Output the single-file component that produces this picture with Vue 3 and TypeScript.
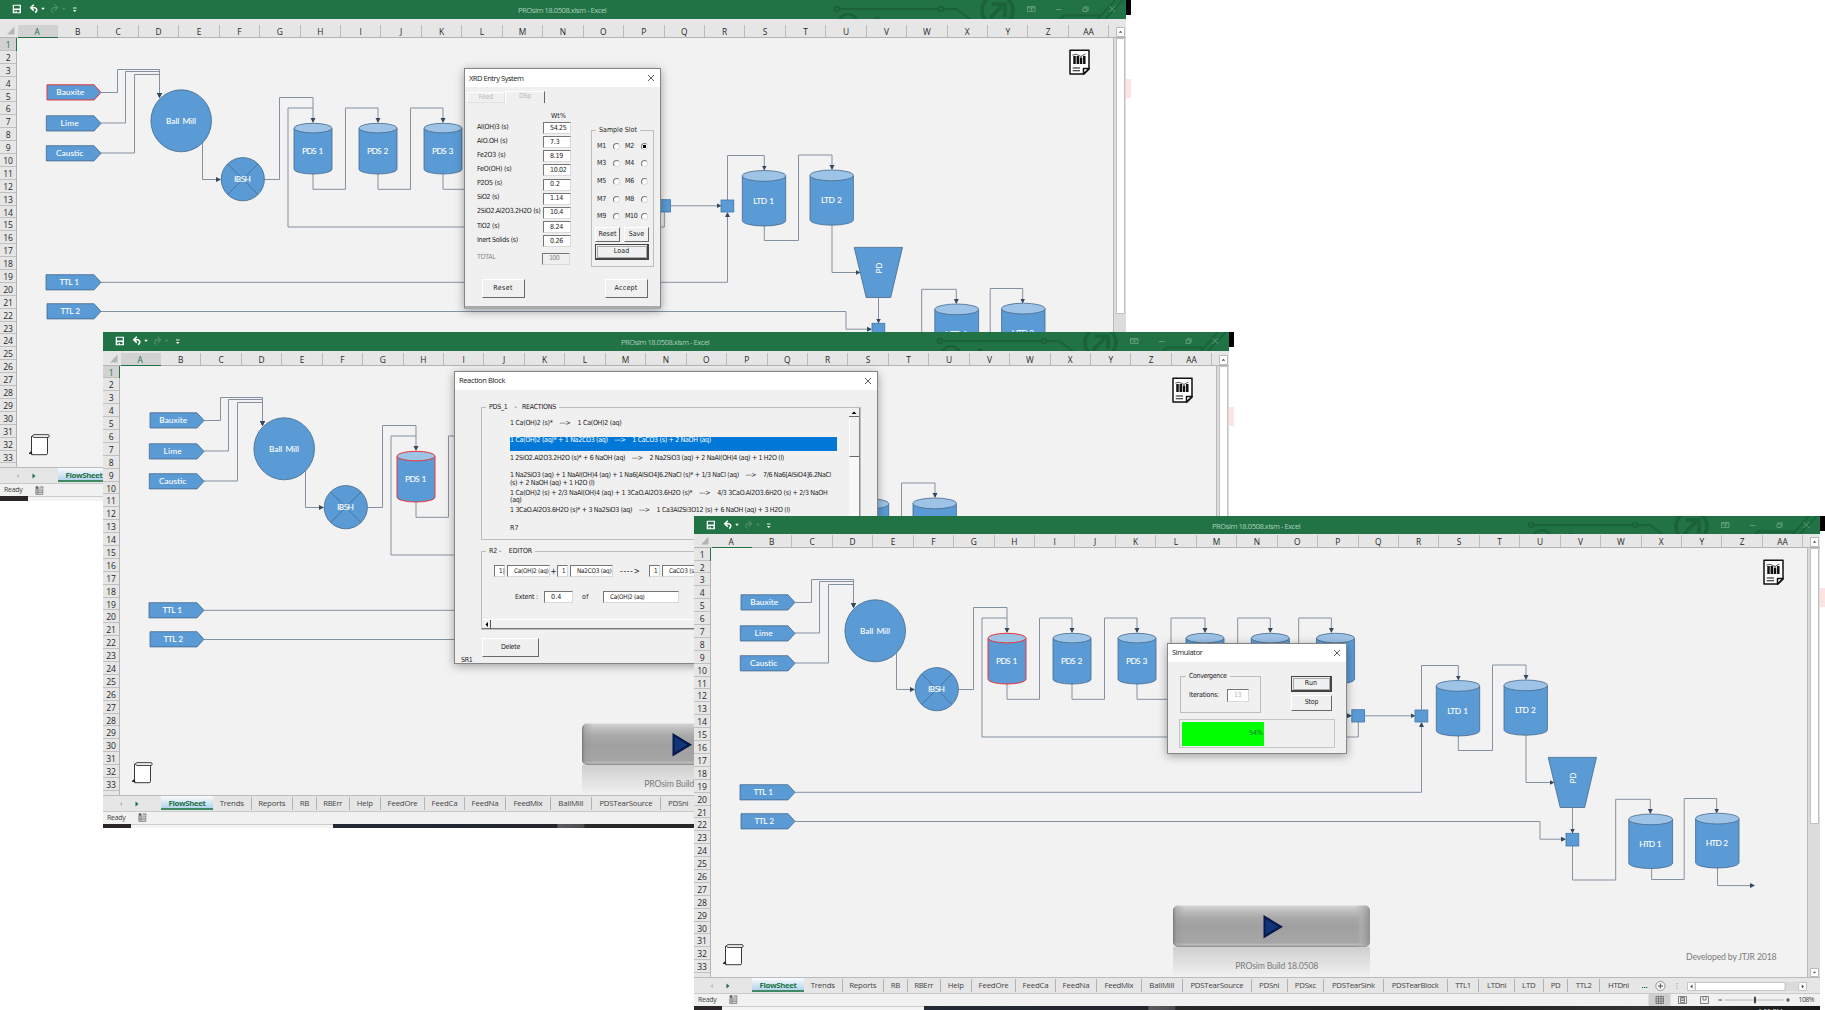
<script setup lang="ts">
interface Win {
  id: number
  x: number
  y: number
  titleH: number
  headH: number
  h: number
  selected: boolean
  red: string
}
interface Tank {
  name: string
  cx: number
  top: number
  bottom: number
  w: number
  textW: number
}

const windows: Win[] = [
  { id: 1, x: 0, y: 0, titleH: 19, headH: 19, h: 501, selected: true, red: 'Bauxite' },
  { id: 2, x: 103, y: 332, titleH: 19, headH: 14.5, h: 496, selected: true, red: 'PDS 1' },
  { id: 3, x: 694, y: 516, titleH: 18, headH: 13.7, h: 494, selected: false, red: 'PDS 1' },
]

const columns = [...'ABCDEFGHIJKLMNOPQRSTUVWXYZ', 'AA']

const feeds = [
  { name: 'Bauxite', x: 47, y: 84.8, w: 28 },
  { name: 'Lime', x: 46.3, y: 115.8, w: 18 },
  { name: 'Caustic', x: 46.3, y: 145.7, w: 27.3 },
  { name: 'TTL 1', x: 46, y: 274.7, w: 19.7 },
  { name: 'TTL 2', x: 47, y: 303.7, w: 19.7 },
]

const tanks: Tank[] = [
  { name: 'PDS 1', cx: 313, top: 123.3, bottom: 174, w: 38, textW: 21.3 },
  { name: 'PDS 2', cx: 378, top: 123.3, bottom: 174, w: 38, textW: 21.3 },
  { name: 'PDS 3', cx: 443, top: 123.3, bottom: 174, w: 38, textW: 21.3 },
  { name: 'PDS 4', cx: 511, top: 123.3, bottom: 174, w: 38, textW: 21.3 },
  { name: 'PDS 5', cx: 576.3, top: 123.3, bottom: 174, w: 38, textW: 21.3 },
  { name: 'PDS 6', cx: 641.5, top: 123.3, bottom: 174, w: 38, textW: 21.3 },
  { name: 'LTD 1', cx: 764, top: 170.5, bottom: 226, w: 43.4, textW: 20.8 },
  { name: 'LTD 2', cx: 831.7, top: 170, bottom: 225.2, w: 43.4, textW: 20.8 },
  { name: 'HTD 1', cx: 956.7, top: 304, bottom: 358.5, w: 43.8, textW: 22.4 },
  { name: 'HTD 2', cx: 1023.3, top: 303.2, bottom: 358, w: 43.4, textW: 22.4 },
]

const pipes = [
  'M101 92.5H117.5V69.5H159.5V97',
  'M100.5 123H125.5V71.5H159.5V97',
  'M100.5 153H134.5V74.5H159.5V97',
  'M202.5 143V179.5H220',
  'M264.5 179.5H279.5V97.5H313V122',
  'M313 174V189.3H345.5V108H378V122',
  'M378 174V189.3H410.5V108H443V122',
  'M443 174V189.3H477V108H511V122',
  'M511 174V189.3H543.7V108H576.3V122',
  'M576.3 174V189.3H604.7V108H637.4V122',
  'M641 174V189.3H650V205.8H657',
  'M671 205.8H720.5',
  'M727.5 200V155.5H764.3V169.5',
  'M764.3 226V240.5H798.5V155H832V169',
  'M832 225V272.5H859.5',
  'M878.5 298V322.5',
  'M100.5 282.3H727.5V213',
  'M101 311.5H846V329.2H871',
  'M878.5 336V370H921.7V289.3H956.3V303',
  'M957.6 358V369.5H990.2V288.5H1022.7V302.5',
  'M1023.5 358V375.6H1060',
]

const sheetTabs: [string, number, number][] = [
  ['Trends', 38.5, 24], ['Reports', 41.5, 27], ['RB', 23.6, 9], ['RBErr', 33.1, 19], ['Help', 31.2, 16],
  ['FeedOre', 44.4, 30], ['FeedCa', 39.6, 26], ['FeedNa', 41.4, 27], ['FeedMix', 44.4, 29], ['BallMill', 41.4, 25],
  ['PDSTearSource', 68.7, 53], ['PDSni', 35.8, 20], ['PDSxc', 36.7, 21], ['PDSTearSink', 59.4, 43],
  ['PDSTearBlock', 64.1, 47], ['TTL1', 31.6, 15.5], ['LTDni', 35.6, 19], ['LTD', 28.8, 13.5], ['PD', 24.7, 9.5],
  ['TTL2', 31.6, 16], ['HTDni', 37, 21],
]

const assays: [string, string, number, number][] = [
  ['Al(OH)3 (s)', '54.25', 31.5, 16.5],
  ['AlO.OH (s)', '7.3', 30.5, 9.5],
  ['Fe2O3 (s)', '8.19', 28.5, 13],
  ['FeO(OH) (s)', '10.02', 34.5, 16.5],
  ['P2O5 (s)', '0.2', 25, 10],
  ['SiO2 (s)', '1.14', 22, 13],
  ['2SiO2.Al2O3.2H2O (s)', '10.4', 63.5, 13],
  ['TiO2 (s)', '8.24', 22.5, 13],
  ['Inert Solids (s)', '0.26', 41, 13],
]

const reactions: [string, number, string, number][] = [
  ['1 Ca(OH)2 (s)*    --->    1 Ca(OH)2 (aq)', 111.5, '', 0],
  ['1 Ca(OH)2 (aq)* + 1 Na2CO3 (aq)    --->    1 CaCO3 (s) + 2 NaOH (aq)', 201, '', 0],
  ['1 2SiO2.Al2O3.2H2O (s)* + 6 NaOH (aq)    --->    2 Na2SiO3 (aq) + 2 NaAl(OH)4 (aq) + 1 H2O (l)', 274, '', 0],
  ['1 Na2SiO3 (aq) + 1 NaAl(OH)4 (aq) + 1 Na6[AlSiO4]6.2NaCl (s)* + 1/3 NaCl (aq)    --->    7/6 Na6[AlSiO4]6.2NaCl', 321, '(s) + 2 NaOH (aq) + 1 H2O (l)', 84.5],
  ['1 Ca(OH)2 (s) + 2/3 NaAl(OH)4 (aq) + 1 3CaO.Al2O3.6H2O (s)*    --->    4/3 3CaO.Al2O3.6H2O (s) + 2/3 NaOH', 317.5, '(aq)', 11.5],
  ['1 3CaO.Al2O3.6H2O (s)* + 3 Na2SiO3 (aq)    --->    1 Ca3Al2Si3O12 (s) + 6 NaOH (aq) + 3 H2O (l)', 280, '', 0],
  ['R7', 8.5, '', 0],
]

function tankPath(t: Tank): string {
  const l = t.cx - t.w / 2
  const r = t.cx + t.w / 2
  const ry = t.w > 40 ? 5.4 : 4.8
  return `M${l} ${t.top + ry}V${t.bottom - ry}A${t.w / 2} ${ry} 0 0 0 ${r} ${t.bottom - ry}V${t.top + ry}`
}

/* Tracks a run of text out or in so that it spans the given width. */
const vFit = {
  mounted(el: HTMLElement, binding: { value: number }) {
    const n = (el.textContent ?? '').length
    if (!n) return
    el.style.letterSpacing = `${(binding.value - el.getBoundingClientRect().width) / n}px`
  },
}
</script>

<template>
  <main class="desktop">
    <section
      v-for="w in windows"
      :key="w.id"
      class="window"
      :style="{ left: w.x + 'px', top: w.y + 'px', height: w.h + 'px' }"
    >
      <div class="frame">
        <header class="titlebar" :style="{ height: w.titleH + 'px' }">
          <svg class="titleart" width="1126" height="19" viewBox="0 0 1126 19">
            <g fill="none" stroke="#1b6139" stroke-width="1.8">
              <circle cx="837" cy="9" r="2.3" />
              <path d="M840 9H938M944 9H956L971 20" />
              <circle cx="941" cy="9" r="2.3" />
              <circle cx="848" cy="24" r="9.8" stroke-width="2.6" />
              <circle cx="997.5" cy="10.5" r="15.5" stroke-width="3.6" />
              <path d="M990 18L1004 4M992 4H1005V17" stroke-width="3.6" />
              <path d="M1059 20L1064 15.5H1102M1097 20L1115 0M1104 20L1123 0" stroke-width="1.8" />
            </g>
            <circle cx="877" cy="19.5" r="3" fill="#1b6139" />
            <path d="M12.700 4.700H21V13.300H12.700ZM14 5.800V8.500H19.700V5.800ZM14.300 10V12.200H15.600V10.800H16.800V12.200H19.400V10Z" fill="#fff" fill-rule="evenodd" />
            <g fill="none" stroke="#fff" stroke-width="1.2">
              <path d="M31 7.700H35A2.500 2.500 0 0 1 35 12.500M33.800 4.700L30.800 7.700L33.800 10.700" stroke-width="1.6" />
              <path d="M57.500 7.700H53.500A2.500 2.500 0 0 0 53.500 12.500M54.700 4.700L57.700 7.700L54.700 10.700" stroke="#4c9069" />
              <path d="M73 8H76.500" stroke-width=".9" />
            </g>
            <path d="M41.200 7.800H44.800L43 9.900ZM73 10H76.500L74.700 12Z" fill="#fff" />
            <path d="M62 7.800H65.500L63.700 9.900Z" fill="#4c9069" />
            <g fill="none" stroke="#6fa586" stroke-width=".8">
              <path d="M1027.500 6.500H1035V11.500H1027.500ZM1027.500 7.800H1035M1031.300 11V8.500M1030 9.700L1031.300 8.400L1032.600 9.700" />
              <path d="M1056 9.500H1061.500" />
              <path d="M1083 8H1087V11.500H1083ZM1084.200 8V6.800H1088.200V10.300H1087" />
              <path d="M1109.500 6.300L1115.200 12M1115.200 6.300L1109.500 12" />
            </g>
          </svg>
          <span class="doc"><span v-fit="88.3" class="t">PROsim 18.0508.xlsm - Excel</span></span>
        </header>

        <div class="colhead" :style="{ height: w.headH + 'px' }">
          <svg class="corner" width="17" height="12" viewBox="0 0 17 12"><path d="M14.500 1.500V9.500H7Z" fill="#b5b5b5" /></svg>
          <span v-for="(c, i) in columns" :key="c" class="col" :class="{ on: i === 0, lit: i === 0 && w.selected }">{{ c }}</span>
          <span class="scrolltop"><svg width="9" height="10" viewBox="0 0 9 10"><path d="M.5 .5H8.500V9.500H.5Z" fill="#fff" stroke="#bbb" /><path d="M2.700 5.700H6.300L4.500 3.800Z" fill="#555" /></svg></span>
        </div>

        <div class="body">
          <div class="rowhead">
            <span v-for="n in 33" :key="n" class="row" :class="{ on: n === 1, lit: n === 1 && w.selected }">{{ n }}</span>
          </div>
          <svg class="sheet" width="1096" height="429" viewBox="17 38 1096 429">
            <defs>
              <marker :id="'tip' + w.id" markerUnits="userSpaceOnUse" markerWidth="6" markerHeight="6" refX="4" refY="2.500" orient="auto">
                <path d="M0 0L5 2.500L0 5Z" fill="#34495f" />
              </marker>
              <linearGradient :id="'btn' + w.id" x1="0" y1="0" x2="0" y2="1">
                <stop offset="0" stop-color="#d6d6d6" /><stop offset=".1" stop-color="#c2c2c2" />
                <stop offset=".3" stop-color="#a9a9a9" /><stop offset=".5" stop-color="#a0a0a0" />
                <stop offset=".9" stop-color="#a6a6a6" /><stop offset=".95" stop-color="#bebebe" /><stop offset="1" stop-color="#858585" />
              </linearGradient>
              <linearGradient :id="'refl' + w.id" x1="0" y1="0" x2="0" y2="1">
                <stop offset="0" stop-color="#cfcfcf" /><stop offset="1" stop-color="#f1f1f1" />
              </linearGradient>
              <linearGradient :id="'side' + w.id" x1="0" y1="0" x2="1" y2="0">
                <stop offset="0" stop-color="#6c6c6c" stop-opacity=".8" /><stop offset=".015" stop-color="#909090" stop-opacity=".4" />
                <stop offset=".06" stop-color="#a0a0a0" stop-opacity="0" /><stop offset=".93" stop-color="#a0a0a0" stop-opacity="0" />
                <stop offset=".95" stop-color="#b5b5b5" stop-opacity=".5" /><stop offset="1" stop-color="#8c8c8c" stop-opacity=".8" />
              </linearGradient>
            </defs>

            <path d="M664.300 212V227H288V108H313" class="pipe" />
            <path v-for="p in pipes" :key="p" :d="p" class="pipe" :marker-end="`url(#tip${w.id})`" />

            <g v-for="f in feeds" :key="f.name">
              <path :d="`M${f.x} ${f.y}H94L101 ${f.y + 7.6}L94 ${f.y + 15.2}H${f.x}Z`" class="shape" :class="{ red: f.name === w.red }" />
              <text :x="f.x + 23.300" :y="f.y + 10.600" :textLength="f.w" class="label">{{ f.name }}</text>
            </g>

            <ellipse cx="181.200" cy="120.800" rx="30.300" ry="31" class="shape" />
            <text x="181" y="123.900" textLength="30" class="label">Ball Mill</text>
            <circle cx="242.800" cy="179.200" r="21.600" class="shape" />
            <path d="M227.600 163.900L258 194.500M258 163.900L227.600 194.500" class="shape" />
            <text x="242.500" y="182.300" textLength="17" class="label">IBSH</text>

            <g v-for="t in tanks" :key="t.name">
              <path :d="tankPath(t)" class="shape" :class="{ red: t.name === w.red }" />
              <ellipse :cx="t.cx" :cy="t.top + (t.w > 40 ? 5.4 : 4.8)" :rx="t.w / 2" :ry="t.w > 40 ? 5.4 : 4.8" class="shape lid" :class="{ red: t.name === w.red }" />
              <text :x="t.cx - .300" :y="(t.top + t.bottom) / 2 + 5.500" :textLength="t.textW" class="label">{{ t.name }}</text>
            </g>

            <rect x="657.800" y="199.700" width="12.800" height="12.300" class="shape box" />
            <rect x="721" y="200" width="12.800" height="12" class="shape box" />
            <rect x="872" y="323.300" width="12.800" height="12.700" class="shape box" />
            <path d="M854.200 247.400H902.500L890.700 297.500H866.200Z" class="shape" />
            <text transform="translate(881.500 268) rotate(-90)" class="label pd">PD</text>

            <g fill="#fff" stroke="#222" stroke-width=".9">
              <path d="M32 436H47.500V453.500Q47.500 454.700 46 454.700H31.500V436" />
              <path d="M33.500 434.700H48.500Q50 436 48.500 437.400H33.500Q31.500 436 33.500 434.700Z" />
              <path d="M29 453.500H32L31 451.800Z" fill="#222" />
            </g>

            <g fill="#fff" stroke="#111" stroke-width="1.500" stroke-linejoin="round">
              <path d="M1070 50.200H1089V69L1084 74H1070Z" />
              <path d="M1083.500 74V68.600H1089Z" />
              <path d="M1072.700 68H1080M1072.700 70.800H1080" stroke-width="1.100" />
              <path d="M1074.500 64V56M1077.800 64V56M1081 64V57.500M1084.300 64V56" stroke-width="2.500" stroke-linejoin="miter" />
              <path d="M1072.300 55.200L1076 54.200L1081 56.500L1085.500 54" fill="none" stroke-width=".7" />
            </g>

            <rect x="479" y="437" width="197" height="30" :fill="`url(#refl${w.id})`" />
            <rect x="479" y="395.500" width="197" height="41.500" rx="5" :fill="`url(#btn${w.id})`" />
            <rect x="479" y="395.500" width="197" height="41.500" rx="5" :fill="`url(#side${w.id})`" />
            <path d="M569.500 405V428.500L589 416.700Z" fill="#071a4e" />
            <path d="M571.500 409V424.500L584.500 416.700Z" fill="#123578" />
            <text x="582.800" y="459.300" textLength="83" class="note">PROsim Build 18.0508</text>
            <text x="1037.300" y="450" textLength="90.500" class="note">Developed by JTJR 2018</text>
          </svg>
          <div class="vscroll"><div class="thumb" /><svg width="9" height="9" viewBox="0 0 9 9"><path d="M.5 .5H8.500V8.500H.5Z" fill="#fff" stroke="#bbb" /><path d="M2.700 3.700H6.300L4.500 5.600Z" fill="#555" /></svg></div>
        </div>

        <div class="tabs">
          <svg width="58" height="17" viewBox="0 0 58 17"><path d="M19 6V10L16.500 8Z" fill="#bbb" /><path d="M32.500 5.500V10.500L35.500 8Z" fill="#1e7145" /></svg>
          <span class="tab active"><span v-fit="37" class="t">FlowSheet</span></span>
          <span v-for="[name, width, tw] in sheetTabs" :key="name" class="tab" :class="{ last: name === 'HTDni' }" :style="{ width: width + 'px' }"><span v-fit="tw" class="t">{{ name }}</span></span>
          <svg class="tabend" width="170" height="17" viewBox="943 0 170 17">
            <path d="M948 9.500H949.300M950 9.500H951.300M952 9.500H953.300" stroke="#1e7145" stroke-width="1.200" />
            <circle cx="966.400" cy="8" r="4.600" fill="#f4f4f4" stroke="#777" stroke-width=".7" />
            <path d="M964 8H969M966.400 5.500V10.500" stroke="#555" />
            <path d="M983 5V6M983 7.500V8.500M983 10V11" stroke="#999" />
            <path d="M993 4H1113V13H993Z" fill="#dadada" />
            <path d="M993.500 4.500H1001V12.500H993.500ZM1001.500 4.500H1091V12.500H1001.500ZM1104.700 4.500H1112.500V12.500H1104.700Z" fill="#fff" stroke="#bbb" stroke-width=".8" />
            <path d="M998.500 6.500V10.500L996.300 8.500ZM1107.800 6.500V10.500L1110 8.500Z" fill="#444" />
          </svg>
        </div>

        <div class="status">
          <span v-fit="18.500" class="t">Ready</span>
          <svg class="macro" width="9" height="9" viewBox="0 0 9 9"><path d="M.8 3H7.800V8.500H.8ZM.8 5H7.800M.8 6.700H7.800M3 3V8.500" fill="#ddd" stroke="#777" stroke-width=".7" /><circle cx="2" cy="1.600" r="1.500" fill="#666" /><path d="M4.500 1H8V2.500" stroke="#777" fill="none" /></svg>
          <svg class="views" width="146" height="12" viewBox="954 0 146 12">
            <path d="M954.500 0H976.500V12H954.500Z" fill="#cfcfcf" />
            <g fill="none" stroke="#666" stroke-width=".8">
              <path d="M962 2.500H969.500V9.500H962ZM962 4.800H969.500M962 7.200H969.500M964.500 2.500V9.500M967 2.500V9.500" />
              <path d="M984.500 2.500H992.500V9.500H984.500ZM986.500 3.500H990.500V8.500H986.500ZM987.200 5H990M987.200 6.500H990" />
              <path d="M1006.500 2.500H1014.500V9.500H1006.500ZM1009 2.500V6H1012V2.500" />
              <path d="M1024.500 6H1028M1092 6H1096M1094 4V8" stroke="#444" stroke-width="1.200" />
              <path d="M1030.500 6H1089.500" stroke="#aaa" />
            </g>
            <path d="M1060 2.700H1062V9.300H1060Z" fill="#444" />
          </svg>
          <span class="zoom"><span v-fit="15.500" class="t">108%</span></span>
        </div>
        <div class="strip"><i class="dark" /><i class="light" /><i class="dark rest" /><b v-if="w.id === 3">6:55 PM</b></div>
      </div>
      <div class="edge">
        <i class="black" />
        <i class="pink" :class="'p' + w.id" />
      </div>

      <div v-if="w.id === 1" class="dialog xrd">
        <div class="dtitle"><span v-fit="54.500" class="t">XRD Entry System</span><svg width="8" height="8" viewBox="0 0 8 8"><path d="M1 1L7 7M7 1L1 7" stroke="#333" stroke-width=".8" /></svg></div>
        <div class="dtabs"><span><em v-fit="14.500" class="t">Feed</em></span><span class="cur"><em v-fit="12" class="t">DSp</em></span></div>
        <div class="xbody">
          <div class="assays">
            <div class="wt"><span v-fit="15" class="t">Wt%</span></div>
            <div v-for="[name, val, lw, vw] in assays" :key="name" class="assay">
              <label><span v-fit="lw" class="t">{{ name }}</span></label>
              <span class="field"><span v-fit="vw" class="t">{{ val }}</span></span>
            </div>
            <div class="assay total"><label><span v-fit="18.500" class="t">TOTAL</span></label><span class="field"><span v-fit="10" class="t">100</span></span></div>
          </div>
          <div class="group slots">
            <span class="legend"><span v-fit="38" class="t">Sample Slot</span></span>
            <div class="radios">
              <div v-for="n in 10" :key="n" class="radio"><label><span v-fit="n === 10 ? 12.500 : 9" class="t">M{{ n }}</span></label><i :class="{ on: n === 2 }" /></div>
            </div>
            <div class="pair"><span class="btn"><span v-fit="18" class="t">Reset</span></span><span class="btn"><span v-fit="15.500" class="t">Save</span></span></div>
            <span class="btn heavy"><span v-fit="15.500" class="t">Load</span></span>
          </div>
        </div>
        <div class="xfoot"><span class="btn"><span v-fit="19.500" class="t">Reset</span></span><span class="btn"><span v-fit="23" class="t">Accept</span></span></div>
      </div>

      <div v-if="w.id === 2" class="dialog reaction">
        <div class="dtitle"><span v-fit="46" class="t">Reaction Block</span><svg width="8" height="8" viewBox="0 0 8 8"><path d="M1 1L7 7M7 1L1 7" stroke="#333" stroke-width=".8" /></svg></div>
        <div class="group list">
          <span class="legend"><span v-fit="67" class="t">{{ 'PDS_1    -   REACTIONS' }}</span></span>
          <div class="items">
            <div v-for="([a, aw, b, bw], i) in reactions" :key="a" class="item" :class="{ sel: i === 1 }">
              <span v-fit="aw" class="t">{{ a }}</span><span v-if="b" v-fit="bw" class="t">{{ b }}</span>
            </div>
          </div>
          <div class="bar"><svg width="10" height="9" viewBox="0 0 10 9"><path d="M0 8.500H10" stroke="#666" /><path d="M2.500 6H7.500L5 3.500Z" fill="#000" /></svg><div class="grip" /></div>
        </div>
        <div class="group editor">
          <span class="legend"><span v-fit="43" class="t">{{ 'R2 -    EDITOR' }}</span></span>
          <div class="eq">
            <span class="field n"><span class="t">1|</span></span><span class="field sp"><span v-fit="34.500" class="t">Ca(OH)2 (aq)</span></span>
            <span class="plus">+</span>
            <span class="field n"><span class="t">1</span></span><span class="field sp"><span v-fit="34.500" class="t">Na2CO3 (aq)</span></span>
            <span class="arrow"><span v-fit="20.500" class="t">----&gt;</span></span>
            <span class="field n"><span class="t">1</span></span><span class="field sp"><span v-fit="27" class="t">CaCO3 (s)</span></span>
          </div>
          <div class="extent">
            <span v-fit="23" class="t">Extent :</span><span class="field e1"><span v-fit="10.500" class="t">0.4</span></span>
            <span v-fit="7" class="t of">of</span><span class="field e2"><span v-fit="34.500" class="t">Ca(OH)2 (aq)</span></span>
          </div>
          <div class="hbar"><svg width="9" height="9" viewBox="0 0 9 9"><path d="M8.500 0V9" stroke="#555" /><path d="M6 2V7L3.500 4.500Z" fill="#000" /></svg></div>
        </div>
        <span class="btn del"><span v-fit="19" class="t">Delete</span></span>
        <div class="sr"><span v-fit="11.500" class="t">SR1</span></div>
      </div>

      <div v-if="w.id === 3" class="dialog sim">
        <div class="dtitle"><span v-fit="30.500" class="t">Simulator</span><svg width="8" height="8" viewBox="0 0 8 8"><path d="M1 1L7 7M7 1L1 7" stroke="#333" stroke-width=".8" /></svg></div>
        <div class="simrow">
          <div class="group conv">
            <span class="legend"><span v-fit="37.500" class="t">Convergence</span></span>
            <div class="iter"><span v-fit="30" class="t">Iterations:</span><span class="field"><span v-fit="7" class="t">13</span></span></div>
          </div>
          <div class="runs"><span class="btn heavy"><span v-fit="12.500" class="t">Run</span></span><span class="btn"><span v-fit="13.500" class="t">Stop</span></span></div>
        </div>
        <div class="progress"><div class="fill"><span v-fit="14" class="t">54%</span></div></div>
      </div>
    </section>
  </main>
</template>

<style>
body { margin: 0; background: #fff; overflow: hidden; }
</style>

<style scoped>
.desktop { position: relative; width: 1825px; height: 1010px; overflow: hidden; background: #fff; font-family: "Open Sans", "Noto Sans", sans-serif; font-size: 7px; color: #333; }
.desktop * { box-sizing: border-box; }
.t { display: inline-block; white-space: pre; font-style: normal; }
svg { display: block; flex: none; }
.window { position: absolute; width: 1131px; display: flex; background: #fff; }
.frame { width: 1126px; flex: none; display: flex; flex-direction: column; background: #e6e6e6; overflow: hidden; height: 100%; }
.edge { width: 5px; flex: none; }
.edge i { display: block; }
.black { height: 15px; background: #000; }
.pink { height: 19px; margin-top: 64px; background: #fde4e3; }
.pink.p2 { margin-top: 60px; }
.pink.p3 { margin-top: 57px; }

.titlebar { flex: none; background: #217346; display: flex; overflow: hidden; }
.doc { width: 90px; margin-left: -608px; color: #a9cdb8; font-size: 7.6px; line-height: 21px; white-space: nowrap; }
.titleart { flex: none; }

.colhead { flex: none; display: flex; align-items: flex-end; border-bottom: 1px solid #b4b4b4; }
.corner { margin-right: .5px; }
.col { width: 40.45px; flex: none; height: 12px; font-size: 8.4px; line-height: 13px; text-align: center; border-right: 1px solid #bcbcbc; color: #262626; }
.col.on { position: relative; border-right-color: transparent; box-shadow: 0 1px 0 #217346; }
.lit { background: #d2d2d2; color: #217346 !important; }
.scrolltop { margin-left: 6.5px; }
.body { flex: none; height: 429px; display: flex; overflow: hidden; }
.rowhead { width: 17px; flex: none; border-right: 1px solid #b4b4b4; display: flex; flex-direction: column; }
.row { height: 12.906px; flex: none; font-size: 8.6px; letter-spacing: -.2px; line-height: 14.600px; text-align: center; border-bottom: 1px solid #c0c0c0; color: #262626; }
.row.on { box-shadow: 1px 0 0 #217346; }
.sheet { background: #f2f2f2; }
.vscroll { width: 13px; background: #dcdcdc; border-left: 1px solid #b8b8b8; padding-left: 2px; display: flex; flex-direction: column; justify-content: space-between; }
.thumb { width: 9px; height: 276px; background: #fff; border: 1px solid #c2c2c2; }

.pipe { fill: none; stroke: #8591a1; stroke-width: 1; }
.shape { fill: #5b9bd5; stroke: #44688c; stroke-width: .8; }
.shape.lid { fill: #9dc3e6; }
.shape.box { stroke: #3f75a8; }
.shape.red { stroke: #e5373c; stroke-width: 1; }
.label { font-family: Lato, "Open Sans", sans-serif; font-size: 8.4px; font-weight: 500; fill: #fff; text-anchor: middle; word-spacing: 1.2px; }
.pd { font-size: 8px; }
.note { font-family: Lato, "Open Sans", sans-serif; font-size: 8.7px; fill: #7c7c7c; text-anchor: middle; }

.tabs { flex: none; height: 17px; display: flex; background: #e6e6e6; border-top: 1px solid #bbb; border-bottom: 1px solid #c9c9c9; overflow: hidden; }
.tab { flex: none; height: 13px; margin-top: 1px; border-right: 1px solid #b2b2b2; font-size: 7.8px; line-height: 13px; display: flex; justify-content: center; color: #444; }
.tab.last { border-right: 0; }
.tab.active { width: 52px; height: 15px; margin-top: -1px; line-height: 16px; font-weight: 700; color: #1e7145; border: 0; border-bottom: 2px solid #3f8a62; background: linear-gradient(#fff, #b4d4ee); }
.status { flex: none; height: 12px; display: flex; align-items: center; background: #f1f1f1; padding-left: 4px; font-size: 7px; line-height: 12px; color: #444; }
.macro { margin-left: 12px; }
.views { margin-left: 910px; }
.zoom { margin-left: 5px; }
.strip { height: 5px; flex: none; display: flex; overflow: hidden; background: #eee; }
.strip i { display: block; height: 5px; flex: none; }
.dark { width: 28px; background: #2b2428; }
.light { width: 202px; background: #f4f4f4; border-top: 1px solid #ccc; }
.rest { width: 896px; background: linear-gradient(90deg, #232a35, #25252e 25%, #5a5a5f 25.1%, #4c4c50 28%, #292929 28.1%, #222 60%, #333 80%, #171717); }
.strip b { width: 30px; margin-left: -62px; flex: none; color: #ddd; font-size: 6.5px; font-weight: 400; line-height: 12px; white-space: nowrap; }

.dialog { position: absolute; background: #f0f0f0; border: 1px solid #858585; box-shadow: 0 2px 9px rgba(0, 0, 0, .35); font-family: "DejaVu Sans Condensed", "DejaVu Sans", sans-serif; font-size: 7px; color: #222; line-height: 9px; }
.dtitle { height: 18px; background: #fff; padding: 0 5px 0 4px; display: flex; align-items: center; justify-content: space-between; font-family: "Open Sans", sans-serif; font-size: 7.5px; }
.field { display: flex; align-items: center; background: #fff; border: 1px solid #d9d9d9; border-top-color: #757575; border-left-color: #757575; height: 12px; padding-left: 6px; }
.btn { display: flex; align-items: center; justify-content: center; border: 1px solid #fff; border-right-color: #696969; border-bottom-color: #696969; background: #f0f0f0; }
.btn.heavy { border: 1px solid #444; outline: 1px solid #aaa; outline-offset: -3px; border-right-width: 2px; border-bottom-width: 2px; }
.group { border: 1px solid #bdbdbd; }
.legend { display: block; height: 8px; margin-top: -5px; line-height: 8px; }
.legend .t { background: #f0f0f0; box-shadow: -3px 0 #f0f0f0, 3px 0 #f0f0f0; }

.xrd { left: 464px; top: 68px; width: 197px; height: 241px; border-bottom: 3px solid #aaa; }
.dtabs { height: 17px; padding: 5px 0 0 2px; display: flex; color: #b9b9b9; }
.dtabs span { width: 38px; height: 11px; text-align: center; border: 1px solid #e0e0e0; border-left-color: #fff; border-top-color: #fff; }
.dtabs .cur { width: 40px; margin-top: -1px; height: 12px; border-right: 1px solid #666; border-bottom: 0; }
.xbody { display: flex; height: 164px; padding: 8px 0 0 12px; }
.assays { width: 94px; }
.wt { height: 9px; padding-left: 74px; }
.assay { height: 14.15px; display: flex; align-items: center; }
.assay label { width: 66px; flex: none; margin-top: -2px; }
.assay .field { width: 28px; }
.total { color: #8a8a8a; margin-top: 3.500px; }
.total .field { margin-left: -1px; background: #f0f0f0; }
.slots { width: 63px; height: 137px; margin: 17.500px 0 0 20px; padding-left: 4px; }
.slots .legend { padding-left: 3px; }
.radios { display: grid; grid-template-columns: 28px 28px; grid-auto-rows: 17.6px; margin: 4px 0 2px 1px; }
.radio { display: flex; align-items: center; }
.radio label { width: 16px; }
.radio i { width: 7px; height: 7px; flex: none; border-radius: 50%; background: #fff; border: 1px solid #777; border-right-color: #ddd; border-bottom-color: #ddd; }
.radio i.on { background: radial-gradient(#000 0 1.4px, #fff 1.9px); }
.pair { display: flex; gap: 4px; height: 15px; margin: 0 0 2px -1px; }
.pair .btn { width: 25px; }
.slots .heavy { width: 54px; height: 16px; margin-left: -1px; }
.xfoot { display: flex; margin: 10.500px 0 0 16.500px; gap: 80px; }
.xfoot .btn { width: 43px; height: 19px; font-size: 7px; }

.reaction { left: 351px; top: 38.5px; width: 424px; height: 293px; }
.list { position: relative; width: 380px; height: 133px; margin: 17.500px 0 0 26px; }
.list .legend, .editor .legend { padding-left: 7px; }
.items { padding-left: 28px; width: 355px; }
.item { height: 14.5px; margin-top: 3.05px; overflow: hidden; line-height: 7.600px; white-space: nowrap; padding-top: .5px; }
.item .t { display: block; width: fit-content; height: 7.6px; }
.items .item:first-child { margin-top: 8px; }
.sel { background: #0078d7; color: #fff; }
.bar { position: absolute; right: 0; top: 0; width: 11px; height: 131px; background: #f8f8f8; border-right: 1px solid #888; }
.bar svg { background: #f0f0f0; }
.grip { height: 40px; background: #f0f0f0; border-bottom: 1px solid #666; border-left: 1px solid #fff; }
.editor { width: 380px; height: 79px; margin: 11px 0 0 26px; }
.eq { display: flex; align-items: center; margin: 10px 0 0 12px; font-size: 6.4px; }
.eq .field { flex: none; }
.n { width: 11px; padding-left: 4px; margin-right: 2px; }
.sp { width: 43px; }
.plus { width: 7px; font-size: 8px; text-align: center; flex: none; }
.arrow { width: 36px; padding-left: 7px; font-size: 8px; flex: none; }
.extent { display: flex; align-items: center; margin: 14px 0 0 33px; }
.e1 { width: 29px; margin-left: 6px; }
.of { margin-left: 9px; }
.e2 { width: 76px; margin-left: 14px; font-size: 6.4px; }
.hbar { margin-top: 16px; height: 10px; border-bottom: 1px solid #777; border-top: 1px solid #fff; }
.del { width: 57px; height: 19px; margin: 7.500px 0 0 27px; }
.sr { padding-left: 6px; margin-top: -.5px; }

.sim { left: 473px; top: 126.5px; width: 180px; height: 111px; }
.simrow { display: flex; height: 57px; padding: 14px 0 0 12px; }
.conv { width: 81px; height: 37px; padding-left: 8px; }
.iter { display: flex; align-items: center; gap: 8px; margin-top: 9.500px; }
.iter .field { width: 22px; height: 13px; color: #b5b5b5; }
.runs { width: 41px; margin-left: 30px; display: flex; flex-direction: column; gap: 3px; }
.runs .btn { height: 16px; }
.progress { width: 156px; height: 29px; margin-left: 11px; border: 1px solid #c5c5c5; padding: 2px; }
.fill { width: 82px; height: 24px; background: #0f0; display: flex; justify-content: flex-end; align-items: center; color: #063; padding-right: 1px; }
</style>
